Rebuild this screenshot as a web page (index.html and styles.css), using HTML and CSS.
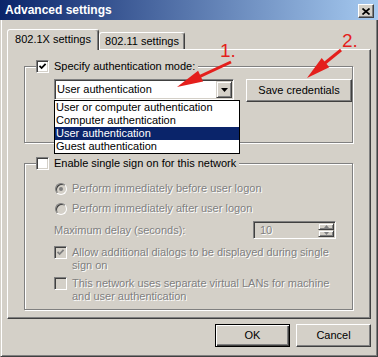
FILE: index.html
```html
<!DOCTYPE html>
<html lang="en">
<head>
    <meta charset="UTF-8">
    <title>Advanced settings</title>
    <link rel="stylesheet" href="styles.css">
</head>
<body>
    <div class="titlebar">
        <span class="title">Advanced settings</span>
        <span class="close-btn">
            <svg width="8" height="7" viewBox="0 0 8 7"><path d="M0.5 0.5L7.5 6.5M7.5 0.5L0.5 6.5" stroke="#000" stroke-width="1.7"/></svg>
        </span>
    </div>

    <div class="dialog">
        <div class="tabs">
            <div class="tab active">802.1X settings</div>
            <div class="tab">802.11 settings</div>
        </div>

        <div class="panel">
            <div class="group group-auth">
                <div class="group-title">
                    <span class="check"><svg width="9" height="9" viewBox="0 0 9 9"><path d="M1.5 3.8L3.6 6L7.6 1.8" fill="none" stroke="#000" stroke-width="1.8"/></svg></span>
                    Specify authentication mode:
                </div>
                <div class="auth-row">
                    <div class="combo">
                        <span class="combo-value">User authentication</span>
                        <span class="combo-arrow"><svg width="7" height="4" viewBox="0 0 7 4"><path d="M0 0h7L3.5 4z" fill="#000"/></svg></span>
                        <ul class="combo-list">
                            <li>User or computer authentication</li>
                            <li>Computer authentication</li>
                            <li class="selected">User authentication</li>
                            <li>Guest authentication</li>
                        </ul>
                    </div>
                    <button class="btn save-btn">Save credentials</button>
                </div>
            </div>

            <div class="group group-sso">
                <div class="group-title">
                    <span class="check"></span>
                    Enable single sign on for this network
                </div>
                <div class="option radio-row disabled">
                    <span class="radio on"></span>
                    <span>Perform immediately before user logon</span>
                </div>
                <div class="option radio-row second disabled">
                    <span class="radio"></span>
                    <span>Perform immediately after user logon</span>
                </div>
                <div class="delay-row disabled">
                    <span>Maximum delay (seconds):</span>
                    <div class="spinner">
                        <span class="spinner-value">10</span>
                        <span class="spin-btns">
                            <span class="spin"><svg width="5" height="3" viewBox="0 0 5 3"><path d="M0 3h5L2.5 0z" fill="#808080"/></svg></span>
                            <span class="spin"><svg width="5" height="3" viewBox="0 0 5 3"><path d="M0 0h5L2.5 3z" fill="#808080"/></svg></span>
                        </span>
                    </div>
                </div>
                <div class="option check-row disabled">
                    <span class="check dim"><svg width="9" height="9" viewBox="0 0 9 9"><path d="M1.5 3.8L3.6 6L7.6 1.8" fill="none" stroke="#808080" stroke-width="1.8"/></svg></span>
                    <span class="option-text">Allow additional dialogs to be displayed during single sign on</span>
                </div>
                <div class="option check-row last disabled">
                    <span class="check dim"></span>
                    <span class="option-text">This network uses separate virtual LANs for machine and user authentication</span>
                </div>
            </div>
        </div>

        <div class="actions">
            <button class="btn btn-default">OK</button>
            <button class="btn">Cancel</button>
        </div>
    </div>

    <svg class="annotations" width="378" height="357" viewBox="0 0 378 357">
        <text x="220" y="57" class="note">1.</text>
        <line x1="231" y1="62" x2="200" y2="76.3" stroke="#e41f1c" stroke-width="3"/>
        <path d="M177 87L203.1 81.5L198.1 70.7Z" fill="#e41f1c"/>
        <text x="342" y="47" class="note">2.</text>
        <line x1="341" y1="50" x2="325" y2="63" stroke="#e41f1c" stroke-width="3"/>
        <path d="M307 78L329.3 67.3L321.7 58.1Z" fill="#e41f1c"/>
    </svg>
</body>
</html>
```

FILE: styles.css
```css
* {
    box-sizing: border-box;
}

body {
    margin: 0;
    width: 378px;
    height: 357px;
    position: relative;
    overflow: hidden;
    background: #d4d0c8;
    font-family: "Liberation Sans", Arial, sans-serif;
    font-size: 11px;
    line-height: 13px;
    color: #000;
}

button {
    font: inherit;
    color: inherit;
    padding: 0;
}

/* title bar */
.titlebar {
    height: 20px;
    display: flex;
    align-items: center;
    justify-content: space-between;
    padding: 0 4px 0 5px;
    background: linear-gradient(to right, #0a246a, #a6caf0);
    color: #fff;
    font-weight: bold;
    font-size: 12px;
}

.close-btn {
    width: 16px;
    height: 14px;
    margin-top: 2px;
    display: flex;
    align-items: center;
    justify-content: center;
    background: #d4d0c8;
    border: 1px solid;
    border-color: #fff #404040 #404040 #fff;
    box-shadow: inset -1px -1px #808080;
}

/* dialog frame */
.dialog {
    height: 337px;
    border: 1px solid;
    border-top: 0;
    border-color: transparent #404040 #404040 #d4d0c8;
    box-shadow: inset 1px 0 #fff, inset -1px -1px #808080;
    padding: 9px 6px 0 6px;
}

.tabs {
    display: flex;
    align-items: flex-end;
    height: 20px;
    position: relative;
    z-index: 1;
}

.tab {
    width: 86px;
    height: 17px;
    padding-top: 2px;
    text-align: center;
    background: #d4d0c8;
    border: 1px solid;
    border-bottom: 0;
    border-color: #fff #404040 transparent #fff;
    border-radius: 3px 3px 0 0;
    box-shadow: inset -1px 0 #808080;
}

.tab.active {
    width: 92px;
    height: 21px;
    padding-top: 3px;
    margin-bottom: -1px;
}

.panel {
    height: 270px;
    padding: 16px 0 0 16px;
    border: 1px solid;
    border-color: #fff #404040 #404040 #fff;
    box-shadow: inset -1px -1px #808080;
}

/* group boxes */
.group {
    width: 329px;
    border: 1px solid #808080;
    box-shadow: inset 1px 1px #fff, 1px 1px #fff;
    padding-left: 29px;
}

.group-auth {
    height: 77px;
}

.group-sso {
    height: 147px;
    margin-top: 20px;
}

.group-title {
    display: flex;
    align-items: center;
    gap: 5px;
    width: fit-content;
    height: 13px;
    margin: -7px 0 0 -18px;
    padding-right: 3px;
    background: #d4d0c8;
}

.check {
    width: 13px;
    height: 13px;
    flex: none;
    display: flex;
    align-items: center;
    justify-content: center;
    background: #fff;
    border: 1px solid;
    border-color: #808080 #fff #fff #808080;
    box-shadow: inset 1px 1px #404040, inset -1px -1px #d4d0c8;
}

.check.dim {
    background: #d4d0c8;
}

.radio {
    width: 12px;
    height: 12px;
    flex: none;
    margin-left: 1px;
    border-radius: 50%;
    display: flex;
    align-items: center;
    justify-content: center;
    background: #d4d0c8;
    border: 1px solid;
    border-color: #808080 #fff #fff #808080;
    box-shadow: inset 1px 1px #404040;
}

.radio.on::after {
    content: "";
    width: 4px;
    height: 4px;
    border-radius: 50%;
    background: #808080;
}

/* combo + button */
.auth-row {
    display: flex;
    align-items: flex-start;
    gap: 12px;
    margin-top: 6px;
}

.combo {
    position: relative;
    width: 180px;
    height: 21px;
    padding: 1px;
    display: flex;
    align-items: center;
    background: #fff;
    border: 1px solid;
    border-color: #808080 #fff #fff #808080;
    box-shadow: inset 1px 1px #404040, inset -1px -1px #d4d0c8;
}

.combo-value {
    padding-left: 1px;
}

.combo-arrow {
    width: 16px;
    height: 17px;
    margin-left: auto;
    display: flex;
    align-items: center;
    justify-content: center;
    background: #d4d0c8;
    border: 1px solid;
    border-color: #d4d0c8 #404040 #404040 #d4d0c8;
    box-shadow: inset 1px 1px #fff, inset -1px -1px #808080;
}

.combo-list {
    position: absolute;
    top: calc(100% + 1px);
    left: -1px;
    width: 186px;
    margin: 0;
    padding: 0;
    list-style: none;
    background: #fff;
    border: 1px solid #000;
}

.combo-list li {
    height: 13px;
    padding-left: 1px;
}

.combo-list li.selected {
    background: #0a246a;
    color: #fff;
}

.btn {
    width: 75px;
    height: 23px;
    text-align: center;
    background: #d4d0c8;
    border: 1px solid;
    border-color: #fff #404040 #404040 #fff;
    box-shadow: inset -1px -1px #808080;
}

.save-btn {
    width: 106px;
}

.btn-default {
    border-color: #000;
    box-shadow: inset 1px 1px #fff, inset -1px -1px #404040, inset -2px -2px #808080;
}

/* single sign on options */
.disabled {
    color: #808080;
    text-shadow: 1px 1px #fff;
}

.option {
    display: flex;
    gap: 5px;
}

.radio-row {
    align-items: center;
    margin-top: 12px;
}

.radio-row.second {
    margin-top: 7px;
}

.check-row {
    align-items: flex-start;
    margin-top: 7px;
}

.check-row.last {
    margin-top: 5px;
}

.option-text {
    width: 268px;
}

.delay-row {
    display: flex;
    align-items: center;
    margin-top: 6px;
}

.spinner {
    width: 83px;
    height: 18px;
    margin: 0 16px 0 auto;
    padding: 1px 1px 1px 6px;
    display: flex;
    align-items: center;
    border: 1px solid;
    border-color: #808080 #fff #fff #808080;
    box-shadow: inset 1px 1px #404040, inset -1px -1px #d4d0c8;
}

.spin-btns {
    margin-left: auto;
    display: flex;
    flex-direction: column;
}

.spin {
    width: 16px;
    height: 7px;
    display: flex;
    align-items: center;
    justify-content: center;
    border: 1px solid;
    border-color: #d4d0c8 #404040 #404040 #d4d0c8;
    box-shadow: inset 1px 1px #fff, inset -1px -1px #808080;
}

/* bottom buttons */
.actions {
    display: flex;
    justify-content: flex-end;
    gap: 6px;
    margin-top: 5px;
}

/* red callouts */
.annotations {
    position: absolute;
    top: 0;
    left: 0;
    pointer-events: none;
}

.note {
    font-family: "Liberation Sans", Arial, sans-serif;
    font-size: 19px;
    fill: #e41f1c;
}
```
